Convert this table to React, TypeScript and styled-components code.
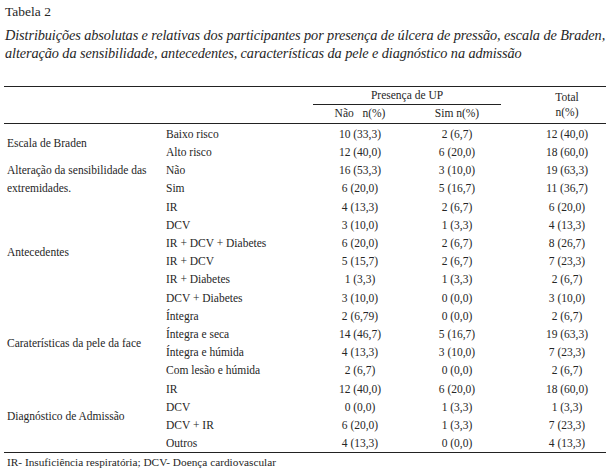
import React from "react";
import styled, { createGlobalStyle } from "styled-components";

const Global = createGlobalStyle`
  html, body { margin: 0; padding: 0; background: #fff; }
  body, table, th, td { font-family: "Liberation Serif", "Times New Roman", serif; color: #262626; }
`;

const Page = styled.div`
  width: 610px;
  padding: 3px 4px 0 4px;
  box-sizing: border-box;
`;

const Title = styled.div`
  font-size: 13.5px;
  line-height: 18px;
  padding-left: 1px;
`;

const Caption = styled.div`
  font-style: italic;
  font-size: 14.3px;
  line-height: 18px;
  margin-top: 5px;
  padding-left: 1px;
  letter-spacing: -0.1px;
`;

const Table = styled.table`
  margin-top: 24px;
  width: 602px;
  border-collapse: collapse;
  font-size: 11.5px;
  table-layout: fixed;
`;

const HeadRow = styled.tr<{ $rule?: boolean }>`
  height: 18px;
  border-top: ${(p) => (p.$rule ? "1.5px solid #222" : "none")};
`;

const HeadCell = styled.th<{ $shift?: number }>`
  font-weight: normal;
  text-align: center;
  padding: 0 0 0 ${(p) => p.$shift ?? 0}px;
  vertical-align: middle;
  line-height: 15px;
`;

const SpanHead = styled.div`
  margin: 0 5px 0 1px;
  border-bottom: 1.5px solid #222;
  line-height: 17px;
`;

const BodyRow = styled.tr<{ $first?: boolean; $last?: boolean }>`
  height: ${(p) => (p.$first ? "20px" : "18.2px")};
  border-top: ${(p) => (p.$first ? "1.5px solid #222" : "none")};
  border-bottom: ${(p) => (p.$last ? "1.5px solid #222" : "none")};
  & > td { padding-top: ${(p) => (p.$first ? "2px" : "0")}; }
`;

const GroupCell = styled.td`
  padding: 0 0 0 3px;
  vertical-align: middle;
  line-height: 18px;
`;

const ItemCell = styled.td`
  padding: 0 0 0 4px;
  vertical-align: middle;
  white-space: nowrap;
`;

const NumCell = styled.td<{ $shift?: number }>`
  text-align: center;
  vertical-align: middle;
  padding: 0 0 0 ${(p) => p.$shift ?? 0}px;
  white-space: nowrap;
`;

const Footer = styled.div`
  font-size: 11.3px;
  padding: 3px 0 0 3px;
`;

type Row = { label: string; n: string; s: string; t: string };
type Group = { name: React.ReactNode; rows: Row[] };

const groups: Group[] = [
  {
    name: "Escala de Braden",
    rows: [
      { label: "Baixo risco", n: "10 (33,3)", s: "2 (6,7)", t: "12 (40,0)" },
      { label: "Alto risco", n: "12 (40,0)", s: "6 (20,0)", t: "18 (60,0)" },
    ],
  },
  {
    name: (
      <>
        Alteração da sensibilidade das
        <br />
        extremidades.
      </>
    ),
    rows: [
      { label: "Não", n: "16 (53,3)", s: "3 (10,0)", t: "19 (63,3)" },
      { label: "Sim", n: "6 (20,0)", s: "5 (16,7)", t: "11 (36,7)" },
    ],
  },
  {
    name: "Antecedentes",
    rows: [
      { label: "IR", n: "4 (13,3)", s: "2 (6,7)", t: "6 (20,0)" },
      { label: "DCV", n: "3 (10,0)", s: "1 (3,3)", t: "4 (13,3)" },
      { label: "IR + DCV + Diabetes", n: "6 (20,0)", s: "2 (6,7)", t: "8 (26,7)" },
      { label: "IR + DCV", n: "5 (15,7)", s: "2 (6,7)", t: "7 (23,3)" },
      { label: "IR + Diabetes", n: "1 (3,3)", s: "1 (3,3)", t: "2 (6,7)" },
      { label: "DCV + Diabetes", n: "3 (10,0)", s: "0 (0,0)", t: "3 (10,0)" },
    ],
  },
  {
    name: "Caraterísticas da pele da face",
    rows: [
      { label: "Íntegra", n: "2 (6,79)", s: "0 (0,0)", t: "2 (6,7)" },
      { label: "Íntegra e seca", n: "14 (46,7)", s: "5 (16,7)", t: "19 (63,3)" },
      { label: "Íntegra e húmida", n: "4 (13,3)", s: "3 (10,0)", t: "7 (23,3)" },
      { label: "Com lesão e húmida", n: "2 (6,7)", s: "0 (0,0)", t: "2 (6,7)" },
    ],
  },
  {
    name: "Diagnóstico de Admissão",
    rows: [
      { label: "IR", n: "12 (40,0)", s: "6 (20,0)", t: "18 (60,0)" },
      { label: "DCV", n: "0 (0,0)", s: "1 (3,3)", t: "1 (3,3)" },
      { label: "DCV + IR", n: "6 (20,0)", s: "1 (3,3)", t: "7 (23,3)" },
      { label: "Outros", n: "4 (13,3)", s: "0 (0,0)", t: "4 (13,3)" },
    ],
  },
];

export default function App() {
  const total = groups.reduce((a, g) => a + g.rows.length, 0);
  let idx = 0;
  return (
    <>
      <Global />
      <Page>
        <Title>Tabela 2</Title>
        <Caption>
          Distribuições absolutas e relativas dos participantes por presença de úlcera de pressão, escala de Braden,
          <br />
          alteração da sensibilidade, antecedentes, características da pele e diagnóstico na admissão
        </Caption>
        <Table>
          <colgroup>
            <col style={{ width: 158 }} />
            <col style={{ width: 150 }} />
            <col style={{ width: 96 }} />
            <col style={{ width: 98 }} />
            <col style={{ width: 100 }} />
          </colgroup>
          <thead>
            <HeadRow $rule>
              <HeadCell />
              <HeadCell />
              <HeadCell colSpan={2}>
                <SpanHead>Presença de UP</SpanHead>
              </HeadCell>
              <HeadCell rowSpan={2} $shift={22}>
                Total
                <br />
                n(%)
              </HeadCell>
            </HeadRow>
            <HeadRow>
              <HeadCell />
              <HeadCell />
              <HeadCell>Não&nbsp;&nbsp; n(%)</HeadCell>
              <HeadCell>Sim n(%)</HeadCell>
            </HeadRow>
          </thead>
          <tbody>
            {groups.map((g, gi) =>
              g.rows.map((r, ri) => {
                const i = idx++;
                return (
                  <BodyRow key={`${gi}-${ri}`} $first={i === 0} $last={i === total - 1}>
                    {ri === 0 && <GroupCell rowSpan={g.rows.length}>{g.name}</GroupCell>}
                    <ItemCell>{r.label}</ItemCell>
                    <NumCell>{r.n}</NumCell>
                    <NumCell>{r.s}</NumCell>
                    <NumCell $shift={22}>{r.t}</NumCell>
                  </BodyRow>
                );
              })
            )}
          </tbody>
        </Table>
        <Footer>IR- Insuficiência respiratória; DCV- Doença cardiovascular</Footer>
      </Page>
    </>
  );
}
